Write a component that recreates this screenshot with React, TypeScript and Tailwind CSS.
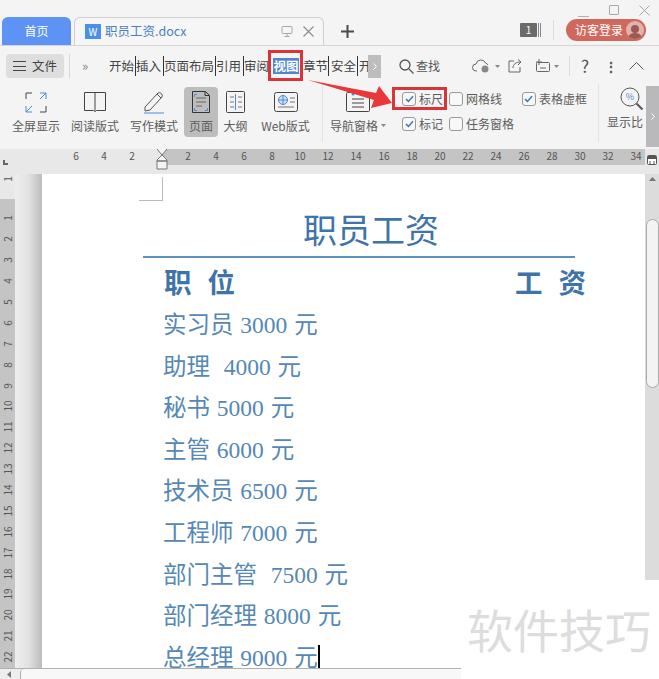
import type { ReactNode } from "react";

const UI_FONT = "font-['Noto_Sans_CJK_SC','Liberation_Sans',sans-serif]";

const MENU_TABS = [
  { label: "开始", width: "w-[27px]" },
  { label: "插入", width: "w-[28px]" },
  { label: "页面布局", width: "w-[52px]" },
  { label: "引用", width: "w-[28px]" },
  { label: "审阅", width: "w-[27px]" },
];

const RULER_LEFT = ["6", "4", "2"];
const RULER_RIGHT = ["2", "4", "6", "8", "10", "12", "14", "16", "18", "20", "22", "24", "26", "28", "30", "32", "34"];
const V_RULER = Array.from({ length: 22 }, (_, i) => String(i + 1));

const ROWS = [
  "实习员 3000 元",
  "助理  4000 元",
  "秘书 5000 元",
  "主管 6000 元",
  "技术员 6500 元",
  "工程师 7000 元",
  "部门主管  7500 元",
  "部门经理 8000 元",
];

function Chevron() {
  return (
    <svg width="4" height="7" viewBox="0 0 4 7" fill="none" stroke="#ffffff">
      <path d="M.5.5l3 3-3 3" />
    </svg>
  );
}

function Caret({ className }: { className: string }) {
  return (
    <svg className={className} width="5" height="3" viewBox="0 0 5 3" fill="#888888">
      <path d="M0 0h5L2.500 3z" />
    </svg>
  );
}

function Tool({ label, width, icon, active }: { label: ReactNode; width: string; icon: ReactNode; active?: boolean }) {
  return (
    <div className={`flex flex-col items-center shrink-0 h-[50px] pt-[3px] rounded ${width} ${active ? "bg-[#bdbdbd]" : ""}`}>
      <div className="h-[24px] flex items-center justify-center">{icon}</div>
      <span className="text-[12px] leading-[17px] mt-[3px] whitespace-nowrap text-[#5c5c5c] flex items-center">{label}</span>
    </div>
  );
}

function Check({ label, checked, width }: { label: string; checked?: boolean; width: string }) {
  return (
    <div className={`flex items-center shrink-0 ${width}`}>
      <span className="w-[14px] h-[14px] border border-[#9a9a9a] rounded-[3px] bg-[#f8f8f8] flex items-center justify-center">
        {checked && (
          <svg width="9" height="8" viewBox="0 0 9 8">
            <path d="M1 4l2.400 2.400L8 1.200" fill="none" stroke="#3f76b8" strokeWidth="1.500" />
          </svg>
        )}
      </span>
      <span className="ml-[3px] text-[12px] text-[#5c5c5c] whitespace-nowrap">{label}</span>
    </div>
  );
}

export default function App() {
  return (
    <div className={`${UI_FONT} relative w-[659px] h-[679px] overflow-hidden bg-[#f4f4f4]`}>
      {/* title bar */}
      <div className="h-[46px] flex items-end pl-[2px] relative border-b border-[#d4d4d4]">
        <div className="w-[69px] h-[28px] rounded-t-md bg-[#5c93f5] text-white text-[12px] flex items-center justify-center">首页</div>
        <div className="ml-[3px] w-[250px] h-[28px] rounded-t-md border border-b-0 border-[#cfcfcf] bg-[#f6f6f6] flex items-center pl-[10px]">
          <span className="w-[16px] h-[15px] bg-[#4a90e8] text-white text-[10px] leading-[15px] text-center">W</span>
          <span className="ml-[4px] text-[12.5px] text-[#4a7fc0]">职员工资.docx</span>
          <svg className="ml-auto" width="12" height="13" viewBox="0 0 12 13" fill="none" stroke="#a8a8a8">
            <rect x="1" y="1.500" width="10" height="7" rx="1" />
            <path d="M6 8.500v3M3.500 11.500h5" />
          </svg>
          <svg className="ml-[10px] mr-[9px]" width="11" height="11" viewBox="0 0 11 11" stroke="#8a8a8a" strokeWidth="1.100">
            <path d="M.5.5l10 10M10.500.5l-10 10" />
          </svg>
        </div>
        <svg className="ml-[17px] mb-[7px]" width="13" height="13" viewBox="0 0 13 13" stroke="#4a4a4a" strokeWidth="2">
          <path d="M6.500 0v13M0 6.500h13" />
        </svg>
        <div className="ml-auto mb-[4px] flex items-center">
          <span className="w-[17px] h-[14px] bg-[#6b6b6b] text-white text-[10px] leading-[14px] text-center rounded-[1px]">1</span>
          <span className="ml-[1px] w-[3px] h-[14px] border-x border-[#8a8a8a]" />
          <span className="ml-[12px] w-px h-[20px] bg-[#dddddd]" />
          <div className="ml-[12px] mr-[13px] w-[80px] h-[22px] rounded-full bg-[#d0695d] flex items-center pl-[9px] text-white text-[12px]">
            访客登录
            <span className="ml-auto mr-[2px] w-[18px] h-[18px] rounded-full bg-[#e2b3ad] flex items-end justify-center overflow-hidden">
              <svg width="14" height="15" viewBox="0 0 14 15" fill="#9c5a52">
                <circle cx="7" cy="5" r="4" />
                <path d="M0 15c0-4 3-6 7-6s7 2 7 6z" />
              </svg>
            </span>
          </div>
        </div>
        {/* window controls */}
        <div className="absolute top-[3px] right-[9px] flex items-center gap-[20px]">
          <span className="w-[11px] h-px bg-[#b0b0b0] mt-[13px]" />
          <span className="w-[10px] h-[10px] border border-[#a8a8a8] rounded-[1px]" />
          <svg width="11" height="11" viewBox="0 0 11 11" stroke="#a8a8a8">
            <path d="M.5.5l10 10M10.500.5l-10 10" />
          </svg>
        </div>
      </div>

      {/* menu bar */}
      <div className="h-[34px] flex items-center pl-[6px] pt-[6px] text-[12.5px] text-[#444]">
        <div className="w-[58px] h-[24px] rounded bg-[#dedede] flex items-center justify-center gap-[6px]">
          <span className="w-[13px] h-[10px] border-y border-[#444] relative flex items-center">
            <span className="w-full h-px bg-[#444]" />
          </span>
          <span>文件</span>
        </div>
        <span className="ml-[5px] w-px h-[24px] bg-[#d8d8d8]" />
        <span className="ml-[12px] w-[27px] text-[#888] text-[13px]">»</span>
        {MENU_TABS.map((t) => (
          <span key={t.label} className={`${t.width} shrink-0 pr-[2px] border-r border-[#333] leading-[20px] whitespace-nowrap overflow-hidden`}>
            {t.label}
          </span>
        ))}
        <span className="ml-[2px] w-[26px] h-[16px] bg-[#4f86d3] text-white text-[12.5px] leading-[16px] font-bold text-center shrink-0">视图</span>
        <span className="ml-[2px] w-[28px] pl-[1px] border-x border-[#333] leading-[20px] shrink-0">章节</span>
        <span className="w-[29px] pl-[2px] border-r border-[#333] leading-[20px] shrink-0">安全</span>
        <span className="w-[10px] pl-[1px] overflow-hidden leading-[20px] shrink-0">开</span>
        <span className="w-[13px] h-[23px] bg-[#bdbdbd] flex items-center justify-center shrink-0">
          <Chevron />
        </span>
        <svg className="ml-[18px] shrink-0" width="15" height="15" viewBox="0 0 15 15" fill="none" stroke="#555" strokeWidth="1.300">
          <circle cx="6" cy="6" r="5" />
          <path d="M10 10l4.500 4.500" />
        </svg>
        <span className="ml-[2px] text-[#555] text-[12px] shrink-0">查找</span>
        <svg className="ml-[32px] shrink-0" width="20" height="16" viewBox="0 0 20 16" fill="none" stroke="#666">
          <path d="M5 13H4a3.500 3.500 0 010-7 5 5 0 019.500-1 4 4 0 012.500 2" />
          <circle cx="13" cy="11" r="3.500" fill="#888" stroke="none" />
        </svg>
        <Caret className="ml-[3px] shrink-0" />
        <svg className="ml-[8px] shrink-0" width="14" height="14" viewBox="0 0 14 14" fill="none" stroke="#666">
          <path d="M6 2H1v11h11V8M5 9c0-4 3-6 8-6M10 .5L13 3l-3 3" />
        </svg>
        <svg className="ml-[13px] shrink-0" width="16" height="14" viewBox="0 0 16 14" fill="none" stroke="#666">
          <rect x="1.500" y="3.500" width="13" height="9" rx="1" />
          <path d="M4 0v6M1 3h6M5 9h6" />
        </svg>
        <Caret className="ml-[3px] shrink-0" />
        <span className="ml-[10px] w-px h-[20px] bg-[#dddddd] shrink-0" />
        <span className="ml-[11px] text-[17px] text-[#555] shrink-0">?</span>
        <span className="ml-[15px] text-[14px] font-bold text-[#555] shrink-0">⋮</span>
        <svg className="ml-[11px] shrink-0" width="15" height="8" viewBox="0 0 15 8" fill="none" stroke="#555">
          <path d="M.5 7.500l7-7 7 7" />
        </svg>
      </div>

      {/* ribbon */}
      <div className="h-[69px] flex items-start pt-[7px] pl-[6px] relative">
        <Tool
          label="全屏显示"
          width="w-[60px]"
          icon={
            <svg width="22" height="21" viewBox="0 0 22 21" fill="none">
              <path d="M7 1H1v6M15 20h6v-6" stroke="#444" />
              <path d="M15 1h6v6M21 1l-6 6M7 20H1v-6M1 20l6-6" stroke="#4f8ad0" />
            </svg>
          }
        />
        <Tool
          label="阅读版式"
          width="w-[58px]"
          icon={
            <svg width="24" height="20" viewBox="0 0 24 20" fill="none" stroke="#444">
              <path d="M1.500.500h21v18h-9l-1.500 1-1.500-1h-9zM12 .5v18" />
            </svg>
          }
        />
        <Tool
          label="写作模式"
          width="w-[60px]"
          icon={
            <svg width="22" height="24" viewBox="0 0 22 24" fill="none">
              <path d="M2 17L15 3a3 3 0 014 4L7 20l-5 1zM14 4l4 4" stroke="#555" />
              <path d="M1 23h20" stroke="#4f8ad0" />
            </svg>
          }
        />
        <Tool
          label="页面"
          width="w-[34px]"
          active
          icon={
            <svg width="20" height="23" viewBox="0 0 20 23" fill="none">
              <path d="M1.500.500h13l4 4v17h-17zM14 .5v4h4" stroke="#333" />
              <path d="M5 7h10M5 11h10M5 15h6" stroke="#666" />
              <path d="M3.500 17v2.500h2.500M14 19.500h2.500V17M3.500 6V3.500H6" stroke="#4f8ad0" />
            </svg>
          }
        />
        <Tool
          label="大纲"
          width="w-[35px]"
          icon={
            <svg width="20" height="22" viewBox="0 0 20 22" fill="none">
              <rect x=".5" y=".5" width="18" height="21" rx="1" stroke="#444" />
              <path d="M9.500 3v16" stroke="#4f8ad0" />
              <path d="M4 6h4M4 11h4M4 16h4M12 6h4M12 11h4M12 16h4" stroke="#777" />
            </svg>
          }
        />
        <Tool
          label="Web版式"
          width="w-[65px]"
          icon={
            <svg width="24" height="20" viewBox="0 0 24 20" fill="none">
              <rect x=".5" y=".5" width="23" height="19" rx="2" stroke="#444" />
              <circle cx="9" cy="8" r="4.500" stroke="#4f8ad0" fill="#cfe0f4" />
              <path d="M4.500 8h9M9 3.500v9" stroke="#4f8ad0" />
              <path d="M16 6h5M16 10h5M4 15h16" stroke="#777" />
            </svg>
          }
        />
        <span className="ml-[4px] w-px h-[58px] -mt-[3px] bg-[#e3e3e3] shrink-0" />
        <Tool
          label={
            <>
              导航窗格
              <Caret className="ml-[3px]" />
            </>
          }
          width="w-[70px]"
          icon={
            <svg width="24" height="20" viewBox="0 0 24 20" fill="none" stroke="#444">
              <rect x=".5" y=".5" width="23" height="19" rx="1" />
              <path d="M6 7h12M6 11h12M6 15h12" />
              <circle cx="7" cy="2" r="1.500" fill="#4f8ad0" stroke="none" />
            </svg>
          }
        />
        <div className="ml-[9px] flex flex-col gap-[7px] pt-[3px] shrink-0">
          <div className="flex h-[18px] items-center">
            <Check label="标尺" checked width="w-[47px]" />
            <Check label="网格线" width="w-[73px]" />
            <Check label="表格虚框" checked width="w-[65px]" />
          </div>
          <div className="flex h-[18px] items-center">
            <Check label="标记" checked width="w-[47px]" />
            <Check label="任务窗格" width="w-[73px]" />
          </div>
        </div>
        <span className="ml-[11px] w-px h-[58px] -mt-[3px] bg-[#e3e3e3] shrink-0" />
        <div className="ml-[8px] w-[38px] flex flex-col items-start overflow-hidden shrink-0">
          <svg className="ml-[13px]" width="24" height="24" viewBox="0 0 24 24" fill="none" stroke="#555">
            <circle cx="10" cy="10" r="9" />
            <path d="M16.500 16.500l6 6" strokeWidth="2" />
            <text x="10" y="13" fontSize="9" fill="#4f8ad0" stroke="none" textAnchor="middle">%</text>
          </svg>
          <span className="text-[12px] leading-[17px] mt-[2px] text-[#5c5c5c] whitespace-nowrap">显示比</span>
        </div>
        <span className="absolute right-0 top-[6px] w-[13px] h-[61px] bg-[#b9b9bb] flex items-center justify-center">
          <Chevron />
        </span>
      </div>

      {/* horizontal ruler */}
      <div className="h-[25px] bg-[#e8e8e8] flex items-start">
        <div className="w-[162px] h-[16px] shrink-0 flex pl-[62px] text-[10px] leading-[14px] text-[#555] relative">
          <span className="absolute left-[3px] top-[11px] w-[5px] h-[5px] border-l-2 border-b-2 border-[#666]" />
          {RULER_LEFT.map((n) => (
            <span key={n} className="w-[28px] text-center shrink-0">{n}</span>
          ))}
        </div>
        <div className="h-[16px] w-[483px] bg-[#c4c4c4] flex pl-[12px] text-[10px] leading-[14px] text-[#555] shrink-0 relative">
          {RULER_RIGHT.map((n) => (
            <span key={n} className="w-[28px] text-center shrink-0">{n}</span>
          ))}
          <svg className="absolute -left-[6px] top-0" width="12" height="21" viewBox="0 0 12 21" fill="#f4f4f4" stroke="#777">
            <path d="M1 0l5 6 5-6M6 6L1 11v1h10v-1zM1 12h10v8H1z" />
          </svg>
        </div>
        <svg className="ml-[2px] mt-[6px] shrink-0" width="10" height="10" viewBox="0 0 10 10">
          <rect x=".5" y=".5" width="9" height="9" rx="1" fill="#fff" stroke="#555" />
          <rect x="1" y="1" width="8" height="3" fill="#555" />
          <path d="M3 6v3M7 6v3" stroke="#555" />
        </svg>
      </div>

      {/* document area */}
      <div className="h-[494px] flex overflow-hidden">
        {/* vertical ruler */}
        <div className="w-[15px] shrink-0 bg-[#e8e8e8] text-[10px] text-[#555] flex flex-col items-center">
          <div className="h-[25px] w-full shrink-0 flex justify-center">
            <span className="h-[10px] leading-[10px] -rotate-90">1</span>
          </div>
          <div className="w-full flex-1 bg-[#c4c4c4] pt-[9px] flex flex-col items-center">
            {V_RULER.map((n) => (
              <div key={n} className="h-[20.9px] shrink-0 flex items-center justify-center">
                <span className="-rotate-90 whitespace-nowrap leading-[10px]">{n}</span>
              </div>
            ))}
          </div>
        </div>
        <div className="w-[27px] shrink-0 bg-gradient-to-r from-[#eeeeee] via-[#e2e2e2] to-[#bcbcbc]" />
        {/* page */}
        <div className="w-[603px] shrink-0 bg-white font-['Liberation_Serif','Noto_Sans_CJK_SC',serif] text-[#5588b4]">
          <div className="ml-[97px] mt-[3px] w-[24px] h-[24px] border-r border-b border-[#bbbbbb]" />
          <div className="ml-[101px] w-[432px] mt-[9px]">
            <h1 className="text-center text-[34px] leading-[44px] text-[#3f74a8] pl-[24px]">职员工资</h1>
            <div className="h-[2px] mt-[2px] bg-[#5b93bd]" />
            <div className="flex justify-between pl-[21px] -mr-[11px] mt-[9px] text-[27.500px] leading-[34px] font-bold text-[#3f74a8]">
              <div className="flex gap-[16px]">
                <span>职</span>
                <span>位</span>
              </div>
              <div className="flex gap-[16px]">
                <span>工</span>
                <span>资</span>
              </div>
            </div>
            <div className="pl-[20px] mt-[4px] text-[23.500px] [word-spacing:1px]">
              {ROWS.map((r) => (
                <div key={r} className="h-[41.6px] leading-[41.6px] whitespace-pre">{r}</div>
              ))}
              <div className="h-[41.6px] leading-[41.6px] whitespace-pre flex items-center">
                总经理 9000 元
                <span className="w-[2px] h-[27px] bg-black" />
              </div>
            </div>
          </div>
        </div>
        {/* vertical scrollbar */}
        <div className="w-[14px] shrink-0 bg-[#dcdcdc] flex flex-col items-center">
          <svg className="mt-[3px]" width="7" height="4" viewBox="0 0 7 4" fill="#777">
            <path d="M3.500 0L7 4H0z" />
          </svg>
          <div className="mt-[38px] w-[13px] h-[169px] bg-[#f3f3f3] border border-[#aaaaaa] rounded-[7px]" />
        </div>
      </div>

      {/* bottom scrollbar */}
      <div className="h-[11px] bg-[#eeeeee] flex items-center border-t border-[#b0b0b0]">
        <svg className="ml-[7px]" width="4" height="7" viewBox="0 0 4 7" fill="#777">
          <path d="M0 3.500L4 0v7z" />
        </svg>
        <div className="ml-[9px] w-[441px] h-full bg-[#f8f8f8] border-l border-[#b0b0b0] rounded-tl-[4px]" />
      </div>

      {/* watermark */}
      <div className="absolute right-0 bottom-0 w-[198px] h-[99px] bg-white text-[#dddddd] text-[46px] leading-[60px] pl-[6px] pt-[18px] font-['Noto_Sans_CJK_SC',sans-serif] whitespace-nowrap">
        软件技巧
      </div>

      {/* annotations */}
      <div className="absolute left-[268px] top-[50px] w-[35px] h-[31px] border-[3px] border-[#d8343a]" />
      <div className="absolute left-[392px] top-[87px] w-[55px] h-[23px] border-[3px] border-[#d8343a]" />
      <svg className="absolute left-[305px] top-[78px]" width="90" height="34" viewBox="0 0 90 34">
        <path d="M3 2L71 15l3-7 13 17-21 5 3-8z" fill="#e8383a" />
      </svg>
    </div>
  );
}
